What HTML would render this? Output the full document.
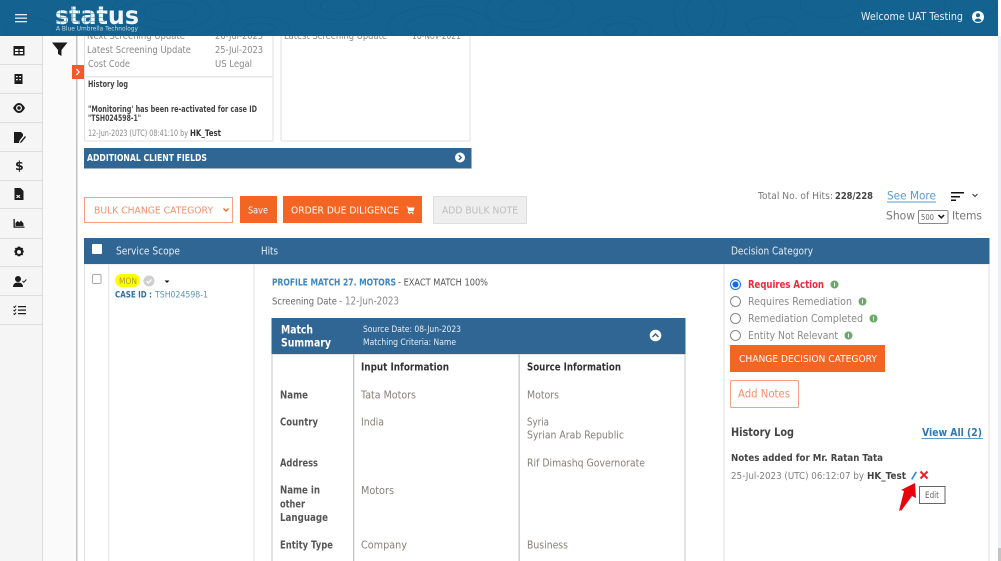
<!DOCTYPE html>
<html><head><meta charset="utf-8"><title>Status</title>
<style>
html,body{margin:0;padding:0;background:#fff;width:1001px;height:561px;overflow:hidden}
svg{display:block}
text{font-family:"DejaVu Sans","Liberation Sans",sans-serif;font-size:10px;fill:#777;white-space:pre}
.b{font-weight:bold}
.g{fill:#8a8a8a}
.d{fill:#444}
.w{fill:#fff}
</style></head><body>
<svg width="1001" height="561" viewBox="0 0 1001 561" xmlns="http://www.w3.org/2000/svg">
<defs><clipPath id="hc"><rect x="0" y="0" width="998" height="36"/></clipPath></defs>
<rect width="1001" height="561" fill="#fff"/>
<!-- scrollbar -->
<rect x="998" y="36" width="3" height="525" fill="#e9eff5"/>
<rect x="998" y="548" width="3" height="13" fill="#c4c4c4"/>
<!-- sidebar -->
<rect x="0" y="36" width="42" height="525" fill="#f5f5f5"/>
<rect x="42" y="36" width="1" height="525" fill="#dcdcdc"/>
<rect x="43" y="36" width="33" height="525" fill="#fafafa"/>
<rect x="76" y="36" width="1.500" height="525" fill="#c2c2c2"/>
<g fill="#dedede">
<rect y="64" width="42" height="1"/><rect y="93" width="42" height="1"/><rect y="122" width="42" height="1"/><rect y="151" width="42" height="1"/><rect y="180" width="42" height="1"/><rect y="208" width="42" height="1"/><rect y="238" width="42" height="1"/><rect y="266" width="42" height="1"/><rect y="295" width="42" height="1"/><rect y="324" width="42" height="1"/>
</g>
<g fill="#1c1c1c">
<path d="M13.500 46h11v9.500h-11zM15 49v2h3.400v-2zM19.600 49v2H23v-2zM15 52v2h3.400v-2zM19.600 52v2H23v-2z" fill-rule="evenodd"/>
<path d="M14.500 74h8v10h-8zM16 76v1.300h1.800V76zM19.200 76v1.300H21V76zM16 79v1.300h1.800V79zM19.200 79v1.300H21V79z" fill-rule="evenodd"/>
<path d="M13 108c2-3.500 4-5 6-5s4 1.500 6 5c-2 3.500-4 5-6 5s-4-1.500-6-5zM19 105a3 3 0 1 0 0 6 3 3 0 0 0 0-6z" fill-rule="evenodd"/>
<circle cx="19" cy="108" r="1.700"/>
<path d="M14 132h7l2 2v2l-3.500 4.500-.5 2.500h-5z"/><path d="M20.500 141.500l4.500-5.500 1 1-4.500 5.500-1.500.5z"/>
<text x="15" y="170" class="b" style="font-size:12.500px;fill:#1c1c1c">$</text>
<path d="M14.500 188h6l3 3v9h-9z"/>
<path d="M13.500 219h1.300v7.500h9.700v1.200h-11z"/><path d="M15.500 226v-3l2-2 2 1.500 1.500-2 2.500 3v2.500z"/>
<path d="M19 246.500l1.300.2.500 1.300 1.400-.4 1 1-.6 1.300 1.100.9v1.400l-1.100.9.600 1.300-1 1-1.400-.4-.5 1.300h-2.600l-.5-1.300-1.400.4-1-1 .6-1.300-1.100-.9v-1.400l1.100-.9-.6-1.300 1-1 1.400.4.500-1.300zM19 250a2 2 0 1 0 0 4 2 2 0 0 0 0-4z" fill-rule="evenodd"/>
<circle cx="18" cy="279" r="3"/><path d="M13 287c0-3 2-4.500 5-4.500s5 1.500 5 4.500z"/>
<path d="M22.500 281l1.300 1.300 2.500-2.800" fill="none" stroke="#1c1c1c" stroke-width="1"/>
<path d="M18 306h8v1.300h-8zM18 309.500h8v1.300h-8zM18 313h8v1.300h-8z"/>
<path d="M13.500 306.500l1 1 1.600-1.800M13.500 310l1 1 1.600-1.800M13.500 313.500l1 1 1.600-1.800" fill="none" stroke="#1c1c1c" stroke-width="1"/>
<path d="M52 42.500h15.500l-6 7.500v6l-3.500-2v-4z"/>
</g>
<text x="15.800" y="198" class="b w" style="font-size:5px" textLength="5" lengthAdjust="spacingAndGlyphs">x</text>
<!-- cards -->
<rect x="84.500" y="30" width="188.500" height="111" fill="#fff" stroke="#e2e2e2"/>
<rect x="84" y="76" width="189" height="1.500" fill="#e6e6e6"/>
<rect x="281" y="30" width="189" height="111" rx="1" fill="#fff" stroke="#e2e2e2"/>
<text x="87" y="39" class="g" textLength="98" lengthAdjust="spacingAndGlyphs">Next Screening Update</text>
<text x="215" y="39" class="g" textLength="48" lengthAdjust="spacingAndGlyphs">26-Jul-2023</text>
<text x="87" y="53" class="g" textLength="104" lengthAdjust="spacingAndGlyphs">Latest Screening Update</text>
<text x="215" y="53" class="g" textLength="48" lengthAdjust="spacingAndGlyphs">25-Jul-2023</text>
<text x="88" y="67" class="g" textLength="42" lengthAdjust="spacingAndGlyphs">Cost Code</text>
<text x="215" y="67" class="g" textLength="37" lengthAdjust="spacingAndGlyphs">US Legal</text>
<text x="88" y="87" class="b d" style="font-size:9px" textLength="40" lengthAdjust="spacingAndGlyphs">History log</text>
<text x="88" y="112" class="b d" style="font-size:9px" textLength="169" lengthAdjust="spacingAndGlyphs">"Monitoring' has been re-activated for case ID</text>
<text x="88" y="121" class="b d" style="font-size:9px" textLength="53" lengthAdjust="spacingAndGlyphs">"TSH024598-1"</text>
<text x="88" y="136" class="g" style="font-size:9px" textLength="100" lengthAdjust="spacingAndGlyphs">12-Jun-2023 (UTC) 08:41:10 by</text>
<text x="190" y="136" class="b" style="font-size:9px;fill:#333" textLength="31" lengthAdjust="spacingAndGlyphs">HK_Test</text>
<text x="284" y="39" class="g" textLength="103" lengthAdjust="spacingAndGlyphs">Latest Screening Update</text>
<text x="412" y="39" class="g" textLength="49" lengthAdjust="spacingAndGlyphs">18-Nov-2021</text>
<rect x="72" y="65" width="12" height="14" fill="#f4592d"/>
<path d="M76.500 69l2.500 3-2.500 3" fill="none" stroke="#fff" stroke-width="1.300"/>
<!-- additional bar -->
<rect x="84" y="148" width="387.500" height="20.500" fill="#2f6694"/>
<text x="87" y="161" class="b w" style="font-size:9.500px" textLength="120" lengthAdjust="spacingAndGlyphs">ADDITIONAL CLIENT FIELDS</text>
<circle cx="460" cy="157.500" r="5" fill="#fff"/>
<path d="M458.800 155l2.400 2.500-2.400 2.500" fill="none" stroke="#2f6694" stroke-width="1.400"/>
<!-- controls -->
<rect x="84.500" y="197.500" width="148" height="25" fill="#fff" stroke="#f4a27f"/>
<text x="94" y="213.500" style="fill:#f58f6a" textLength="119" lengthAdjust="spacingAndGlyphs">BULK CHANGE CATEGORY</text>
<path d="M223.500 208.500l2.500 2.500 2.500-2.500" fill="none" stroke="#ef6a33" stroke-width="1.400"/>
<rect x="240" y="196" width="37" height="27" fill="#f26522"/>
<text x="248" y="213.500" class="w" textLength="20" lengthAdjust="spacingAndGlyphs">Save</text>
<rect x="283" y="196" width="139" height="27" fill="#f26522"/>
<text x="291" y="213.500" class="w" textLength="108" lengthAdjust="spacingAndGlyphs">ORDER DUE DILIGENCE</text>
<path d="M406.500 206.500h1.500l.5 1h6l-1 3.700h-4.500l-.3 1h4.500v.8h-5.500l.6-2.200-1.100-3.500h-.7z" fill="#fff"/>
<circle cx="409.500" cy="213.500" r=".8" fill="#fff"/><circle cx="412.800" cy="213.500" r=".8" fill="#fff"/>
<rect x="433.500" y="196.500" width="93" height="27" rx="1" fill="#eee" stroke="#ddd"/>
<text x="442" y="213.500" style="fill:#bdbdbd" textLength="76" lengthAdjust="spacingAndGlyphs">ADD BULK NOTE</text>
<text x="758" y="199" style="fill:#777" textLength="75" lengthAdjust="spacingAndGlyphs">Total No. of Hits:</text>
<text x="835" y="199" class="b" style="fill:#444" textLength="38" lengthAdjust="spacingAndGlyphs">228/228</text>
<text x="887" y="199.500" style="font-size:11.500px;fill:#5b9bd0" textLength="49" lengthAdjust="spacingAndGlyphs">See More</text>
<rect x="887" y="201.500" width="49" height="1" fill="#5b9bd0"/>
<rect x="951" y="192" width="13" height="1.500" fill="#111"/><rect x="951" y="196" width="9" height="1.500" fill="#111"/><rect x="951" y="199.500" width="5" height="1.500" fill="#111"/>
<path d="M972.500 194l2.500 2.500 2.500-2.500" fill="none" stroke="#333" stroke-width="1"/>
<text x="886" y="219.500" style="font-size:11.500px;fill:#777" textLength="29" lengthAdjust="spacingAndGlyphs">Show</text>
<rect x="918.500" y="210.500" width="29.500" height="13" rx="1" fill="#fff" stroke="#8a8a8a"/>
<text x="921" y="220" style="font-size:7.500px;fill:#666" textLength="13" lengthAdjust="spacingAndGlyphs">500</text>
<path d="M938.500 215l2.800 2.800 2.800-2.800" fill="none" stroke="#111" stroke-width="1.500"/>
<text x="952" y="219.500" style="font-size:11.500px;fill:#777" textLength="30" lengthAdjust="spacingAndGlyphs">Items</text>
<!-- table -->
<rect x="84.500" y="264" width="904.500" height="300" fill="#fff" stroke="#e2e2e2"/>
<rect x="108" y="264" width="1.500" height="297" fill="#ececec"/>
<rect x="253.500" y="264" width="1" height="297" fill="#e2e2e2"/>
<rect x="723.500" y="264" width="1" height="297" fill="#e2e2e2"/>
<rect x="84" y="238" width="905.500" height="26" fill="#2f6694"/>
<rect x="92" y="244" width="10" height="10" rx="1" fill="#fff"/>
<text x="116" y="254.500" style="font-size:11px;fill:#e6eef5" textLength="64" lengthAdjust="spacingAndGlyphs">Service Scope</text>
<text x="261" y="254.500" style="font-size:11px;fill:#e6eef5" textLength="17" lengthAdjust="spacingAndGlyphs">Hits</text>
<text x="731" y="254.500" style="font-size:11px;fill:#e6eef5" textLength="82" lengthAdjust="spacingAndGlyphs">Decision Category</text>
<rect x="92.500" y="274.500" width="8.500" height="9" rx="1" fill="#fff" stroke="#aaa"/>
<rect x="115" y="274" width="25" height="13" rx="6.500" fill="#ffff00"/>
<text x="119" y="284" style="font-size:8.500px;fill:#a89c3a" textLength="18" lengthAdjust="spacingAndGlyphs">MON</text>
<circle cx="149" cy="281" r="5.500" fill="#cfcfcf"/>
<path d="M146.500 281l2 2 3-3.500" fill="none" stroke="#fff" stroke-width="1.200"/>
<path d="M164.500 280.500h5l-2.500 2.500z" fill="#111"/>
<text x="115" y="297.500" class="b" style="font-size:9px;fill:#2f6e9f" textLength="37" lengthAdjust="spacingAndGlyphs">CASE ID :</text>
<text x="155" y="297.500" style="font-size:9px;fill:#5f93b8" textLength="53" lengthAdjust="spacingAndGlyphs">TSH024598-1</text>
<!-- hits -->
<text x="272" y="285.500" style="font-size:9.500px;fill:#3a85c5;font-weight:bold" textLength="124" lengthAdjust="spacingAndGlyphs">PROFILE MATCH 27. MOTORS</text>
<text x="398" y="285.500" style="font-size:9.500px;fill:#555" textLength="90" lengthAdjust="spacingAndGlyphs">- EXACT MATCH 100%</text>
<text x="272" y="304.500" style="font-size:9.500px;fill:#666" textLength="65" lengthAdjust="spacingAndGlyphs">Screening Date</text>
<text x="339" y="304.500" style="font-size:10.500px;fill:#888" textLength="60" lengthAdjust="spacingAndGlyphs">- 12-Jun-2023</text>
<rect x="272" y="354" width="413" height="210" fill="#fff" stroke="#c4c4c4"/>
<rect x="353" y="354" width="1.300" height="207" fill="#c4c4c4"/>
<rect x="518.500" y="354" width="1.300" height="207" fill="#c4c4c4"/>
<rect x="271.500" y="318" width="414" height="36" fill="#2f6694"/>
<text x="281" y="333.500" class="b w" style="font-size:11.500px" textLength="32" lengthAdjust="spacingAndGlyphs">Match</text>
<text x="281" y="346.500" class="b w" style="font-size:11.500px" textLength="50" lengthAdjust="spacingAndGlyphs">Summary</text>
<text x="363" y="332" style="font-size:9px;fill:#e6eef5" textLength="98" lengthAdjust="spacingAndGlyphs">Source Date: 08-Jun-2023</text>
<text x="363" y="345" style="font-size:9px;fill:#e6eef5" textLength="93" lengthAdjust="spacingAndGlyphs">Matching Criteria: Name</text>
<circle cx="655.500" cy="335.500" r="5.800" fill="#fff"/>
<path d="M652.500 337l3-3 3 3" fill="none" stroke="#2f6694" stroke-width="1.500"/>
<text x="361" y="370.500" class="b" style="font-size:10.500px;fill:#333" textLength="88" lengthAdjust="spacingAndGlyphs">Input Information</text>
<text x="527" y="370.500" class="b" style="font-size:10.500px;fill:#333" textLength="94" lengthAdjust="spacingAndGlyphs">Source Information</text>
<g>
<text x="280" y="398.500" style="font-size:10.500px;fill:#555;font-weight:bold" textLength="28" lengthAdjust="spacingAndGlyphs">Name</text>
<text x="280" y="425.500" style="font-size:10.500px;fill:#555;font-weight:bold" textLength="38" lengthAdjust="spacingAndGlyphs">Country</text>
<text x="280" y="466.500" style="font-size:10.500px;fill:#555;font-weight:bold" textLength="38" lengthAdjust="spacingAndGlyphs">Address</text>
<text x="280" y="493.500" style="font-size:10.500px;fill:#555;font-weight:bold" textLength="40" lengthAdjust="spacingAndGlyphs">Name in</text>
<text x="280" y="507.500" style="font-size:10.500px;fill:#555;font-weight:bold" textLength="25" lengthAdjust="spacingAndGlyphs">other</text>
<text x="280" y="521" style="font-size:10.500px;fill:#555;font-weight:bold" textLength="48" lengthAdjust="spacingAndGlyphs">Language</text>
<text x="280" y="548.500" style="font-size:10.500px;fill:#555;font-weight:bold" textLength="53" lengthAdjust="spacingAndGlyphs">Entity Type</text>
<text x="361" y="398.500" style="font-size:10.500px;fill:#86807a" textLength="55" lengthAdjust="spacingAndGlyphs">Tata Motors</text>
<text x="361" y="425.500" style="font-size:10.500px;fill:#86807a" textLength="23" lengthAdjust="spacingAndGlyphs">India</text>
<text x="361" y="494" style="font-size:10.500px;fill:#86807a" textLength="33" lengthAdjust="spacingAndGlyphs">Motors</text>
<text x="361" y="548.500" style="font-size:10.500px;fill:#86807a" textLength="46" lengthAdjust="spacingAndGlyphs">Company</text>
<text x="527" y="398.500" style="font-size:10.500px;fill:#86807a" textLength="32" lengthAdjust="spacingAndGlyphs">Motors</text>
<text x="527" y="425.500" style="font-size:10.500px;fill:#86807a" textLength="22" lengthAdjust="spacingAndGlyphs">Syria</text>
<text x="527" y="438.500" style="font-size:10.500px;fill:#86807a" textLength="97" lengthAdjust="spacingAndGlyphs">Syrian Arab Republic</text>
<text x="527" y="466.500" style="font-size:10.500px;fill:#86807a" textLength="118" lengthAdjust="spacingAndGlyphs">Rif Dimashq Governorate</text>
<text x="527" y="548.500" style="font-size:10.500px;fill:#86807a" textLength="41" lengthAdjust="spacingAndGlyphs">Business</text>
</g>
<!-- decision -->
<circle cx="735.500" cy="284.500" r="5" fill="#fff" stroke="#1a73e8"/><circle cx="735.500" cy="284.500" r="3" fill="#0a6cf0"/>
<circle cx="735.500" cy="301.500" r="5" fill="#fff" stroke="#888"/>
<circle cx="735.500" cy="318.500" r="5" fill="#fff" stroke="#888"/>
<circle cx="735.500" cy="335.500" r="5" fill="#fff" stroke="#888"/>
<text x="748" y="288" class="b" style="font-size:10.500px;fill:#f0283c" textLength="76" lengthAdjust="spacingAndGlyphs">Requires Action</text>
<text x="748" y="305" style="font-size:10.500px;fill:#888" textLength="104" lengthAdjust="spacingAndGlyphs">Requires Remediation</text>
<text x="748" y="322" style="font-size:10.500px;fill:#888" textLength="115" lengthAdjust="spacingAndGlyphs">Remediation Completed</text>
<text x="748" y="339" style="font-size:10.500px;fill:#888" textLength="90" lengthAdjust="spacingAndGlyphs">Entity Not Relevant</text>
<g fill="#6aa96a"><circle cx="834.500" cy="284.500" r="4"/><circle cx="862.500" cy="301.500" r="4"/><circle cx="873.500" cy="318.500" r="4"/><circle cx="848.500" cy="335.500" r="4"/></g>
<g fill="#fff"><rect x="834" y="282.500" width="1" height="4"/><rect x="862" y="299.500" width="1" height="4"/><rect x="873" y="316.500" width="1" height="4"/><rect x="848" y="333.500" width="1" height="4"/></g>
<rect x="730" y="345" width="155" height="27" fill="#f26522"/>
<text x="739" y="362" class="w" textLength="138" lengthAdjust="spacingAndGlyphs">CHANGE DECISION CATEGORY</text>
<rect x="730.500" y="380.500" width="68" height="27" rx="1" fill="#fff" stroke="#f4a27f"/>
<text x="738" y="397.500" style="font-size:11.500px;fill:#f58f6a" textLength="52" lengthAdjust="spacingAndGlyphs">Add Notes</text>
<text x="731" y="436" class="b" style="font-size:11.500px;fill:#444" textLength="63" lengthAdjust="spacingAndGlyphs">History Log</text>
<text x="922" y="436" class="b" style="font-size:11px;fill:#2d78b9" textLength="60" lengthAdjust="spacingAndGlyphs">View All (2)</text>
<rect x="921.500" y="438" width="61.500" height="1" fill="#5b9bd0"/>
<text x="731" y="461" class="b" style="font-size:10px;fill:#444" textLength="152" lengthAdjust="spacingAndGlyphs">Notes added for Mr. Ratan Tata</text>
<text x="731" y="479" style="font-size:10px;fill:#808080" textLength="133" lengthAdjust="spacingAndGlyphs">25-Jul-2023 (UTC) 06:12:07 by</text>
<text x="867" y="479" class="b" style="font-size:10px;fill:#444" textLength="39" lengthAdjust="spacingAndGlyphs">HK_Test</text>
<path d="M911 479l4.500-7.500 1.500.8-4.500 7.500z" fill="#2d8fd5"/>
<path d="M920.500 471.500l7 7M927.500 471.500l-7 7" stroke="#e8232e" stroke-width="2"/>
<path d="M915 483l1 15-4-2-11 15 0-1-2 1 5-20-3-1z" fill="#e8000f"/>
<rect x="919.500" y="486.500" width="25.500" height="17" fill="#fff" stroke="#666"/>
<text x="925" y="498" style="font-size:9px;fill:#666" textLength="14" lengthAdjust="spacingAndGlyphs">Edit</text>
<!-- header -->
<rect x="0" y="0" width="998" height="36" fill="#14628f"/>
<g fill="none" stroke="#0f5a86" stroke-width=".6" opacity=".7" clip-path="url(#hc)">
<ellipse cx="170" cy="12" rx="26" ry="10"/><ellipse cx="170" cy="12" rx="42" ry="18"/><ellipse cx="170" cy="12" rx="58" ry="26"/>
<ellipse cx="260" cy="28" rx="30" ry="11"/><ellipse cx="260" cy="28" rx="16" ry="5"/><ellipse cx="340" cy="6" rx="36" ry="14"/><ellipse cx="340" cy="6" rx="20" ry="7"/>
<ellipse cx="440" cy="26" rx="34" ry="12"/><ellipse cx="440" cy="26" rx="52" ry="20"/><ellipse cx="530" cy="10" rx="28" ry="12"/><ellipse cx="530" cy="10" rx="44" ry="20"/>
<ellipse cx="620" cy="30" rx="30" ry="14"/><ellipse cx="620" cy="30" rx="16" ry="7"/><ellipse cx="700" cy="14" rx="14" ry="20"/><ellipse cx="700" cy="14" rx="26" ry="30"/>
<ellipse cx="770" cy="26" rx="24" ry="10"/><ellipse cx="830" cy="4" rx="30" ry="14"/><ellipse cx="30" cy="30" rx="24" ry="12"/>
<ellipse cx="900" cy="34" rx="40" ry="12"/><ellipse cx="970" cy="6" rx="26" ry="12"/><ellipse cx="100" cy="-2" rx="34" ry="12"/>
</g>
<rect x="15" y="14" width="12" height="1.300" fill="#e6eef5"/><rect x="15" y="17.500" width="12" height="1.300" fill="#e6eef5"/><rect x="15" y="21" width="12" height="1.300" fill="#e6eef5"/>
<text x="55" y="24" class="b" style="font-size:25px;fill:#f0f5f9" textLength="84" lengthAdjust="spacingAndGlyphs">status</text>
<g fill="#14628f" opacity=".5"><rect x="55" y="9" width="50" height=".7"/><rect x="55" y="13" width="50" height=".7"/><rect x="55" y="17" width="50" height=".7"/><rect x="55" y="21" width="50" height=".7"/><rect x="60" y="4" width=".7" height="22"/><rect x="66" y="4" width=".7" height="22"/><rect x="72" y="4" width=".7" height="22"/><rect x="78" y="4" width=".7" height="22"/><rect x="84" y="4" width=".7" height="22"/><rect x="90" y="4" width=".7" height="22"/><rect x="96" y="4" width=".7" height="22"/></g>
<text x="56" y="30.500" style="font-size:6px;fill:#c6d9e6" textLength="82" lengthAdjust="spacingAndGlyphs">A Blue Umbrella Technology</text>
<text x="861" y="20" style="font-size:11px;fill:#e8f0f6" textLength="102" lengthAdjust="spacingAndGlyphs">Welcome UAT Testing</text>
<circle cx="978" cy="17" r="6" fill="#fff"/>
<circle cx="978" cy="15.300" r="2" fill="#14628f"/>
<path d="M974.500 20.800c.8-1.800 2-2.300 3.500-2.300s2.700.5 3.500 2.300c-2 1.500-5 1.500-7 0z" fill="#14628f"/>
</svg>
</body></html>
